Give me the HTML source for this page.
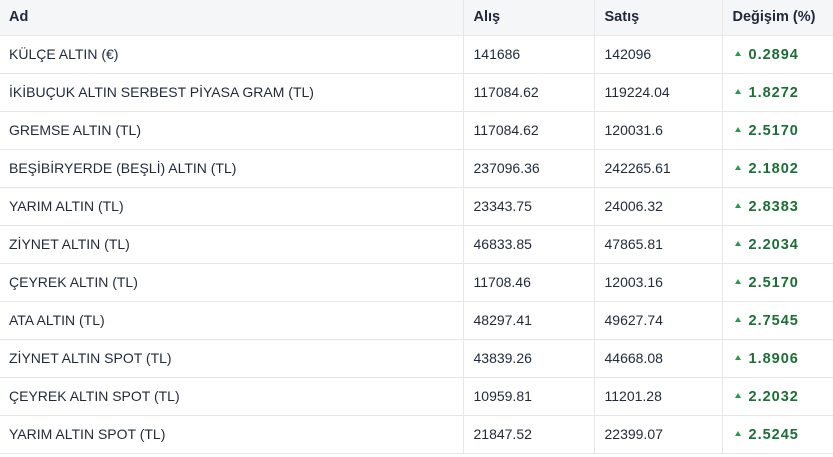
<!DOCTYPE html>
<html><head><meta charset="utf-8"><style>
body{margin:0;background:#fff;font-family:"Liberation Sans",Arial,sans-serif;color:#1f2937;}
table{border-collapse:collapse;width:833px;table-layout:fixed;}
col.a{width:463px}col.b{width:131px}col.c{width:128px}col.d{width:111px}
th{background:#f5f6f8;height:35px;padding:0 0 0 10px;text-align:left;font-size:14.5px;font-weight:bold;color:#1e293b;border-bottom:1px solid #e6e6e6;border-left:1px solid #e6e6e6;box-sizing:border-box}
td{height:38px;padding:0 0 0 10px;font-size:14px;line-height:16px;vertical-align:middle;border-bottom:1px solid #e6e6e6;border-left:1px solid #e6e6e6;box-sizing:border-box;color:#1f2a3a}
th:first-child,td:first-child{border-left:none;padding-left:9px}
td.g{font-weight:bold;color:#1b6e35;padding-left:12px;font-size:14.5px;letter-spacing:1px;padding-top:2px}
.t{display:inline-block;width:0;height:0;border-left:3.5px solid transparent;border-right:3.5px solid transparent;border-bottom:5px solid #2a9a4a;margin-right:8px;position:relative;top:-3px}
</style></head><body>
<table><colgroup><col class="a"><col class="b"><col class="c"><col class="d"></colgroup>
<tr><th>Ad</th><th>Alış</th><th>Satış</th><th>Değişim (%)</th></tr>
<tr><td>KÜLÇE ALTIN (€)</td><td>141686</td><td>142096</td><td class="g"><span class="t"></span>0.2894</td></tr>
<tr><td>İKİBUÇUK ALTIN SERBEST PİYASA GRAM (TL)</td><td>117084.62</td><td>119224.04</td><td class="g"><span class="t"></span>1.8272</td></tr>
<tr><td>GREMSE ALTIN (TL)</td><td>117084.62</td><td>120031.6</td><td class="g"><span class="t"></span>2.5170</td></tr>
<tr><td>BEŞİBİRYERDE (BEŞLİ) ALTIN (TL)</td><td>237096.36</td><td>242265.61</td><td class="g"><span class="t"></span>2.1802</td></tr>
<tr><td>YARIM ALTIN (TL)</td><td>23343.75</td><td>24006.32</td><td class="g"><span class="t"></span>2.8383</td></tr>
<tr><td>ZİYNET ALTIN (TL)</td><td>46833.85</td><td>47865.81</td><td class="g"><span class="t"></span>2.2034</td></tr>
<tr><td>ÇEYREK ALTIN (TL)</td><td>11708.46</td><td>12003.16</td><td class="g"><span class="t"></span>2.5170</td></tr>
<tr><td>ATA ALTIN (TL)</td><td>48297.41</td><td>49627.74</td><td class="g"><span class="t"></span>2.7545</td></tr>
<tr><td>ZİYNET ALTIN SPOT (TL)</td><td>43839.26</td><td>44668.08</td><td class="g"><span class="t"></span>1.8906</td></tr>
<tr><td>ÇEYREK ALTIN SPOT (TL)</td><td>10959.81</td><td>11201.28</td><td class="g"><span class="t"></span>2.2032</td></tr>
<tr><td>YARIM ALTIN SPOT (TL)</td><td>21847.52</td><td>22399.07</td><td class="g"><span class="t"></span>2.5245</td></tr>
</table>
</body></html>
